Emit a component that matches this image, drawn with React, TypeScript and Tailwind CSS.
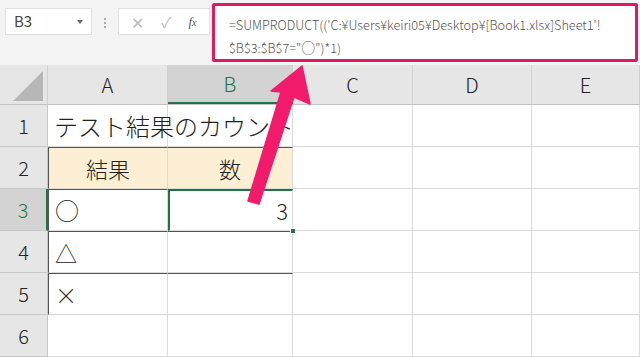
import React from 'react';

const cols = ['A', 'B', 'C', 'D', 'E'];
const colW = ['w-[120px]', 'w-[125px]', 'w-[120px]', 'w-[119px]', 'flex-1'];

const font = { fontFamily: '"Noto Sans CJK JP", "Noto Sans", sans-serif' };

function Toolbar() {
  return (
    <div className="h-[65px] bg-[#f3f3f3] flex items-start relative">
      {/* name box */}
      <div className="mt-[8px] ml-[5px] w-[87px] h-[27px] bg-white border border-[#e1e1e1] flex items-center justify-between px-2">
        <span className="text-[15px] text-[#444]" style={font}>B3</span>
        <span className="w-0 h-0 border-l-[3px] border-r-[3px] border-t-[4px] border-l-transparent border-r-transparent border-t-[#666]" />
      </div>
      <div className="mt-[18px] ml-[12px] flex flex-col gap-[2px]">
        <span className="w-[2px] h-[2px] bg-[#aaa]" />
        <span className="w-[2px] h-[2px] bg-[#aaa]" />
        <span className="w-[2px] h-[2px] bg-[#aaa]" />
      </div>
      {/* function buttons */}
      <div className="mt-[8px] ml-[12px] w-[92px] h-[27px] bg-white border border-[#e1e1e1] flex items-center justify-around px-1">
        <span className="text-[16px] text-[#bbb] leading-none">✕</span>
        <span className="text-[15px] text-[#bbb] leading-none">✓</span>
        <span className="text-[13px] text-[#555] italic leading-none" style={{ fontFamily: '"Liberation Serif", serif' }}>
          f<span className="text-[10px]">x</span>
        </span>
      </div>
      {/* formula bar */}
      <div className="mt-[3px] ml-[2px] w-[426px] h-[59px] bg-white border-[3px] border-[#e4175f] rounded-[2px] pl-[14px] pt-[8px] text-[12.7px] leading-[22px] text-[#555] font-light" style={font}>
        <div className="whitespace-nowrap">=SUMPRODUCT(('C:¥Users¥keiri05¥Desktop¥[Book1.xlsx]Sheet1'!</div>
        <div className="whitespace-nowrap">$B$3:$B$7="<span className="text-[14px]">○</span>")*1)</div>
      </div>
    </div>
  );
}

type Cell = { text?: string; cls?: string };

const rows: Cell[][] = [
  [{ text: 'テスト結果のカウント', cls: 'overflow-visible whitespace-nowrap z-10 text-[24px]' }, {}],
  [
    { text: '結果', cls: 'bg-[#fcefd4] justify-center border-[#555] border-t border-l border-r' },
    { text: '数', cls: 'bg-[#fcefd4] justify-center border-[#555] border-t border-r' },
  ],
  [
    { text: '○', cls: 'border-[#555] border-l border-r border-t text-[24px]' },
    { text: '3', cls: 'justify-end pr-[4px] border-[#217346] border-2 relative' },
  ],
  [
    { text: '△', cls: 'border-[#555] border-l border-r border-t' },
    { text: '', cls: 'border-[#555] border-r border-t' },
  ],
  [
    { text: '×', cls: 'border-[#555] border-l border-r border-t border-b' },
    { text: '', cls: 'border-[#555] border-r border-t border-b' },
  ],
  [{}, {}],
];

export default function App() {
  return (
    <div className="w-[640px] h-[357px] overflow-hidden bg-white relative" style={font}>
      <Toolbar />
      {/* column header */}
      <div className="flex h-[40px] bg-[#e6e6e6] border-b border-[#c4c4c4]">
        <div className="w-[48px] relative border-r border-[#d0d0d0]">
          <div
            className="absolute right-[4px] bottom-[3px] w-[30px] h-[30px] bg-[#b7b7b7]"
            style={{ clipPath: 'polygon(100% 0, 100% 100%, 0 100%)' }}
          />
        </div>
        {cols.map((c, i) => (
          <div
            key={c}
            className={`${colW[i]} flex items-center justify-center text-[20px] font-light border-r border-[#d0d0d0] ${
              c === 'B' ? 'bg-[#d3d3d3] text-[#217346] border-b-2 border-b-[#217346]' : 'text-[#222]'
            }`}
          >
            {c}
          </div>
        ))}
      </div>
      {/* rows */}
      {rows.map((r, ri) => (
        <div key={ri} className="flex h-[42px]">
          <div
            className={`w-[48px] flex items-center justify-center text-[20px] font-light border-r border-b border-[#c8c8c8] ${
              ri === 2 ? 'bg-[#d3d3d3] text-[#217346] border-r-2 border-r-[#217346]' : 'bg-[#e6e6e6] text-[#222]'
            }`}
          >
            {ri + 1}
          </div>
          {cols.map((c, ci) => {
            const cell = r[ci] || {};
            return (
              <div
                key={c}
                className={`${colW[ci]} flex items-center px-[6px] text-[22px] font-light text-[#222] border-r border-b border-r-[#dadada] border-b-[#dadada] ${cell.cls || ''}`}
              >
                {cell.text}
                {ri === 2 && ci === 1 && (
                  <span className="absolute -right-[4px] -bottom-[4px] w-[6px] h-[6px] bg-[#217346] border border-white" />
                )}
              </div>
            );
          })}
        </div>
      ))}
      {/* arrow */}
      <svg className="absolute left-0 top-0 pointer-events-none z-20" width="640" height="357">
        <polygon
          points="302,66 310,104 294,97 259,204 248,201 281,92 271,91"
          fill="#f21b6b"
          stroke="#f21b6b"
          strokeLinejoin="round"
          strokeWidth="1.5"
        />
      </svg>
    </div>
  );
}
